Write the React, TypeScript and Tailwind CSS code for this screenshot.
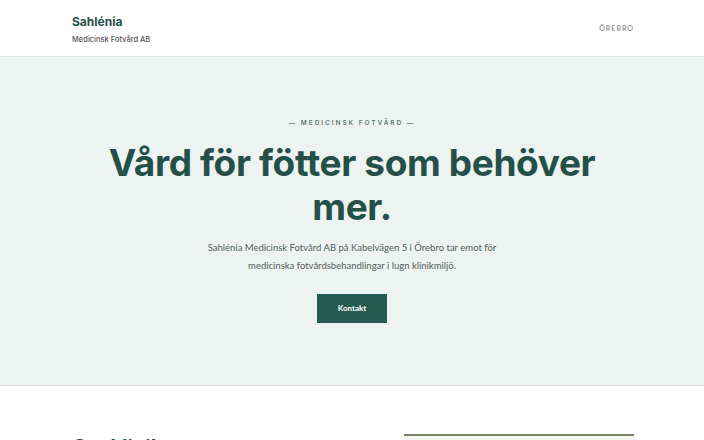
export default function App() {
  return (
    <div className="min-h-screen bg-white font-['Inter',sans-serif] text-[#245048]">
      {/* Top bar */}
      <header className="border-b border-[#dfe5e2]">
        <div className="mx-auto flex h-14 max-w-[562px] translate-x-[1px] items-center justify-between">
          <div className="flex flex-col pt-[3px]">
            <span className="text-[12px] font-bold leading-none">Sahlénia</span>
            <span className="mt-[8px] text-[7.5px] font-medium leading-none text-[#555]">
              Medicinsk Fotvård AB
            </span>
          </div>
          <span className="font-['Lato',sans-serif] text-[7px] tracking-[0.15em] text-[#777]">ÖREBRO</span>
        </div>
      </header>

      {/* Hero */}
      <section className="border-b border-[#d4d9d7] bg-[#ecf3f1]">
        <div className="mx-auto flex h-[328px] max-w-[562px] flex-col items-center pt-[62px] text-center">
          <p className="text-[6.5px] font-semibold tracking-[0.3em] text-[#5d7972]">
            — MEDICINSK FOTVÅRD —
          </p>
          <h1 className="mt-[12px] text-[37px] font-bold leading-[44px] tracking-[-0.01em]">
            Vård för fötter som behöver
            <br />
            mer.
          </h1>
          <p className="mt-[10px] font-['Lato',sans-serif] text-[9.5px] leading-[18px] text-[#525e5b]">
            Sahlénia Medicinsk Fotvård AB på Kabelvägen 5 i Örebro tar emot för
            <br />
            medicinska fotvårdsbehandlingar i lugn klinikmiljö.
          </p>
          <button
            type="button"
            className="mt-[19px] h-[29px] w-[70px] bg-[#245a50] font-['Lato',sans-serif] text-[8px] font-bold text-white"
          >
            Kontakt
          </button>
        </div>
      </section>

      {/* About */}
      <section className="mx-auto grid max-w-[562px] translate-x-[1px] grid-cols-[1fr_230px] gap-[40px] pt-[48px]">
        <h2 className="pt-[3px] text-[20px] font-bold leading-none">Om kliniken</h2>
        <div className="h-40 border-t-2 border-[#7d806a] bg-[#f1f6f3]" />
      </section>
    </div>
  );
}
